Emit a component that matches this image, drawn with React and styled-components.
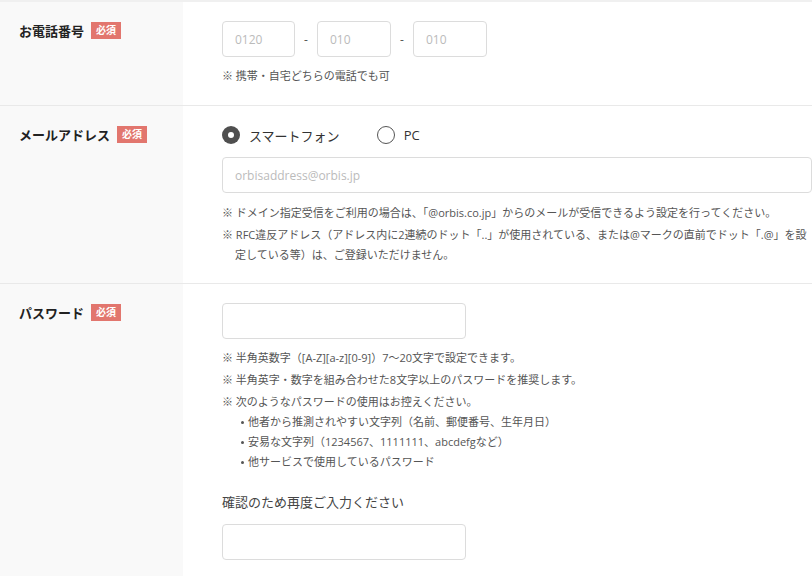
import React from 'react';
import styled, { createGlobalStyle } from 'styled-components';

const GlobalStyle = createGlobalStyle`
    html, body {
        margin: 0;
        padding: 0;
        background: #fff;
    }
    body {
        font-family: "Open Sans", "Noto Sans CJK JP", sans-serif;
        color: #333;
        overflow: hidden;
    }
`;

const Form = styled.div`
    width: 812px;
    border-top: 2px solid #f0f0f0;
`;

const Row = styled.div`
    display: grid;
    grid-template-columns: 183px 1fr;
    border-bottom: ${props => props.last ? 'none' : '1px solid #e9e9e9'};
`;

const LabelCell = styled.div`
    display: flex;
    align-items: flex-start;
    padding: ${props => props.top || '19px'} 0 0 19px;
    background: #f9f9f9;
`;

const Label = styled.span`
    font-size: 13px;
    font-weight: bold;
    line-height: 20px;
    color: #222;
`;

const Badge = styled.span`
    display: inline-block;
    margin: 1px 0 0 7px;
    padding: 0 5px;
    height: 17px;
    line-height: 17px;
    font-size: 10px;
    font-weight: bold;
    color: #fff;
    background: #e2766e;
`;

const ContentCell = styled.div`
    padding: ${props => props.pad || '19px 0 18px 39px'};
`;

const TelGroup = styled.div`
    display: flex;
    align-items: center;
`;

const Dash = styled.span`
    width: 22px;
    text-align: center;
    font-size: 12px;
    color: #555;
`;

const TextInput = styled.input`
    box-sizing: border-box;
    width: ${props => props.width || '100%'};
    height: 36px;
    padding: 0 12px;
    border: 1px solid #dcdcdc;
    border-radius: 4px;
    background: #fff;
    font-family: "Open Sans", "Noto Sans CJK JP", sans-serif;
    font-size: 12px;
    color: #333;
    outline: none;

    &::placeholder {
        color: #bbb;
    }
`;

const Notes = styled.div`
    margin-top: ${props => props.mt || '9px'};
    display: flex;
    flex-direction: column;
    gap: 2px;
`;

const Note = styled.p`
    margin: 0;
    padding-left: 13px;
    text-indent: -13px;
    font-size: 11px;
    line-height: 20px;
    color: #555;
`;

const BulletList = styled.ul`
    margin: -2px 0 0;
    padding: 0 0 0 19px;
    list-style: none;
`;

const Bullet = styled.li`
    position: relative;
    padding-left: 7px;
    font-size: 11px;
    line-height: 20px;
    color: #555;

    &::before {
        content: "";
        position: absolute;
        left: 0;
        top: 9px;
        width: 3px;
        height: 3px;
        border-radius: 50%;
        background: #555;
    }
`;

const RadioGroup = styled.div`
    display: flex;
    align-items: center;
    height: 20px;
    margin-bottom: 12px;
`;

const RadioOption = styled.label`
    display: flex;
    align-items: center;
    margin-right: 37px;
    font-size: 13px;
    color: #333;
`;

const RadioMark = styled.span`
    box-sizing: border-box;
    position: relative;
    width: 18px;
    height: 18px;
    margin-right: 9px;
    border-radius: 50%;
    border: ${props => props.checked ? 'none' : '1px solid #555'};
    background: ${props => props.checked ? '#4f4f4f' : '#fff'};

    &::after {
        content: "";
        display: ${props => props.checked ? 'block' : 'none'};
        position: absolute;
        left: 6px;
        top: 6px;
        width: 6px;
        height: 6px;
        border-radius: 50%;
        background: #fff;
    }
`;

const SubLabel = styled.div`
    margin: 20px 0 12px;
    font-size: 13px;
    line-height: 20px;
    color: #444;
`;

const App = () => {
    return (
        <>
            <GlobalStyle />
            <Form>
                <Row>
                    <LabelCell top="19px">
                        <Label>お電話番号</Label>
                        <Badge>必須</Badge>
                    </LabelCell>
                    <ContentCell pad="19px 0 19px 39px">
                        <TelGroup>
                            <TextInput width="73px" placeholder="0120" />
                            <Dash>-</Dash>
                            <TextInput width="74px" placeholder="010" />
                            <Dash>-</Dash>
                            <TextInput width="74px" placeholder="010" />
                        </TelGroup>
                        <Notes>
                            <Note>※ 携帯・自宅どちらの電話でも可</Note>
                        </Notes>
                    </ContentCell>
                </Row>
                <Row>
                    <LabelCell>
                        <Label>メールアドレス</Label>
                        <Badge>必須</Badge>
                    </LabelCell>
                    <ContentCell>
                        <RadioGroup>
                            <RadioOption>
                                <RadioMark checked />
                                スマートフォン
                            </RadioOption>
                            <RadioOption>
                                <RadioMark />
                                PC
                            </RadioOption>
                        </RadioGroup>
                        <TextInput placeholder="orbisaddress@orbis.jp" />
                        <Notes mt="10px">
                            <Note>※ ドメイン指定受信をご利用の場合は、「@orbis.co.jp」からのメールが受信できるよう設定を行ってください。</Note>
                            <Note>※ RFC違反アドレス（アドレス内に2連続のドット「..」が使用されている、または@マークの直前でドット「.@」を設定している等）は、ご登録いただけません。</Note>
                        </Notes>
                    </ContentCell>
                </Row>
                <Row last>
                    <LabelCell>
                        <Label>パスワード</Label>
                        <Badge>必須</Badge>
                    </LabelCell>
                    <ContentCell pad="19px 0 20px 39px">
                        <TextInput width="244px" type="password" />
                        <Notes>
                            <Note>※ 半角英数字（[A-Z][a-z][0-9]）7～20文字で設定できます。</Note>
                            <Note>※ 半角英字・数字を組み合わせた8文字以上のパスワードを推奨します。</Note>
                            <Note>※ 次のようなパスワードの使用はお控えください。</Note>
                            <BulletList>
                                <Bullet>他者から推測されやすい文字列（名前、郵便番号、生年月日）</Bullet>
                                <Bullet>安易な文字列（1234567、1111111、abcdefgなど）</Bullet>
                                <Bullet>他サービスで使用しているパスワード</Bullet>
                            </BulletList>
                        </Notes>
                        <SubLabel>確認のため再度ご入力ください</SubLabel>
                        <TextInput width="244px" type="password" />
                    </ContentCell>
                </Row>
            </Form>
        </>
    );
};

export default App;
